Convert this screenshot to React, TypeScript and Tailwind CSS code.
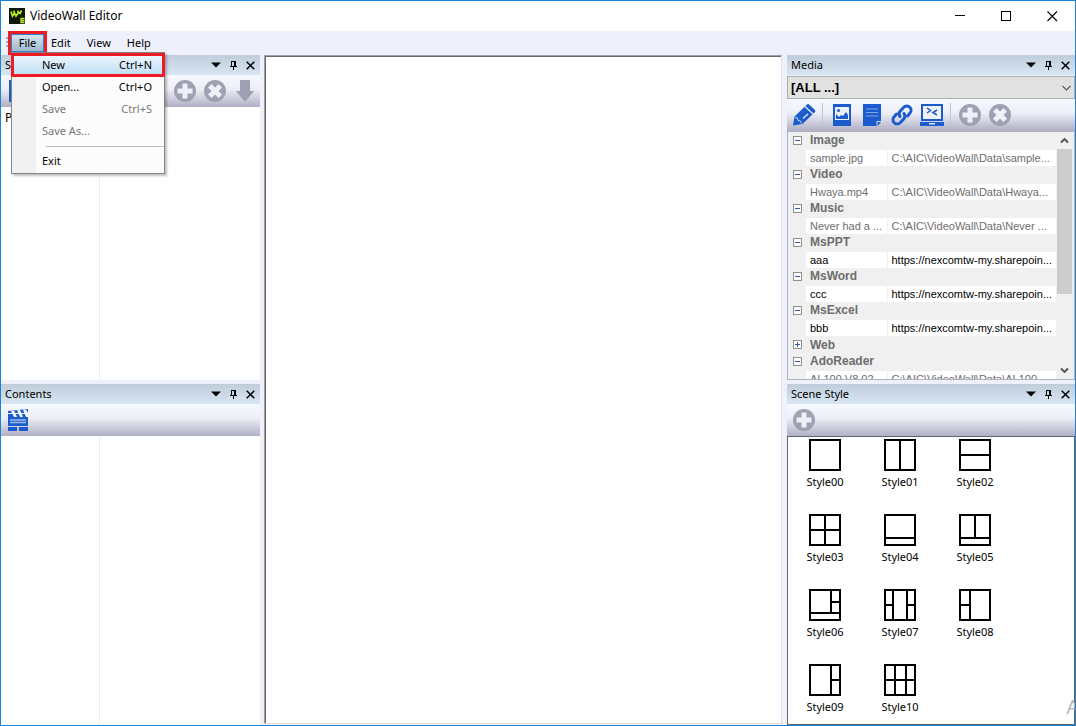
import React from "react";

const BLUE = "#1a5ccd";
const GREY = "#9da1b1";

function PanelHeader({ title }: { title: string }) {
  return (
    <header className="flex h-5 shrink-0 items-center bg-linear-to-b from-[#bfcddb] to-[#d8e6f4] pl-1 pr-[3px] text-[11px] text-black">
      <h2 className="flex-1">{title}</h2>
      <div className="flex items-center gap-[3px]">
        <button aria-label="Window position" className="flex h-3.5 w-3.5 items-center justify-center">
          <svg width="10" height="6" viewBox="0 0 10 6"><path d="M0 0.5h10L5 5.5z" fill="#000" /></svg>
        </button>
        <button aria-label="Auto hide" className="flex h-3.5 w-3.5 items-center justify-center">
          <svg width="7" height="9" viewBox="0 0 7 9" shapeRendering="crispEdges">
            <path d="M1 0h5v5h1v1H4v3H3V6H0V5h1zM2 1v4h2V1z" fillRule="evenodd" />
          </svg>
        </button>
        <button aria-label="Close panel" className="flex h-3.5 w-3.5 items-center justify-center">
          <svg width="9" height="9" viewBox="0 0 9 9"><path d="M0.7 0.7l7.6 7.6M8.3 0.7L0.7 8.3" stroke="#000" strokeWidth="1.5" /></svg>
        </button>
      </div>
    </header>
  );
}

function Toolbar({ children }: { children: React.ReactNode }) {
  return (
    <div className="flex h-8 shrink-0 items-center gap-1.5 bg-linear-to-b from-[#f6f9ff] via-[#ededf6] via-45% to-[#b0b0c6] pl-[5px] pr-[3px]">
      {children}
    </div>
  );
}

function Tool({ label, children }: { label: string; children: React.ReactNode }) {
  return (
    <button aria-label={label} className="h-6 w-6 shrink-0">
      <svg width="24" height="24" viewBox="0 0 24 24">{children}</svg>
    </button>
  );
}

const Divider = () => <span className="flex h-6 w-0.5 border-l border-[#c3c5d2]" />;

const AddTool = () => (
  <Tool label="Add">
    <circle cx="12" cy="12" r="11" fill={GREY} />
    <path d="M9.5 4.5h5v5h5v5h-5v5h-5v-5h-5v-5h5z" fill="#f0f1f8" />
  </Tool>
);

const RemoveTool = () => (
  <Tool label="Remove">
    <circle cx="12" cy="12" r="11" fill={GREY} />
    <path d="M8.5 5L12 8.5 15.5 5 19 8.5 15.5 12 19 15.5 15.5 19 12 15.5 8.5 19 5 15.5 8.5 12 5 8.5z" fill="#f0f1f8" />
  </Tool>
);

type Group = { name: string; open: boolean; item?: string; path?: string; dim?: boolean };
const groups: Group[] = [
  { name: "Image", open: true, item: "sample.jpg", path: "C:\\AIC\\VideoWall\\Data\\sample...", dim: true },
  { name: "Video", open: true, item: "Hwaya.mp4", path: "C:\\AIC\\VideoWall\\Data\\Hwaya...", dim: true },
  { name: "Music", open: true, item: "Never had a ...", path: "C:\\AIC\\VideoWall\\Data\\Never ...", dim: true },
  { name: "MsPPT", open: true, item: "aaa", path: "https://nexcomtw-my.sharepoin..." },
  { name: "MsWord", open: true, item: "ccc", path: "https://nexcomtw-my.sharepoin..." },
  { name: "MsExcel", open: true, item: "bbb", path: "https://nexcomtw-my.sharepoin..." },
  { name: "Web", open: false },
  { name: "AdoReader", open: true, item: "AL100 V8.02", path: "C:\\AIC\\VideoWall\\Data\\AL100...", dim: true },
];

function MediaTable() {
  return (
    <table className="w-full table-fixed border-collapse text-[11px] leading-4">
      <colgroup>
        <col className="w-[18px]" />
        <col className="w-[81px]" />
        <col />
      </colgroup>
      <tbody>
        {groups.map((g) => (
          <React.Fragment key={g.name}>
            <tr className="h-[17px]">
              <td className="p-0 pl-[5px]">
                <button aria-label={`Toggle ${g.name}`} className="block h-[9px] w-[9px]">
                  <svg width="9" height="9" viewBox="0 0 9 9" shapeRendering="crispEdges">
                    <rect x="0.5" y="0.5" width="8" height="8" fill="#fafafa" stroke="#919191" />
                    <path d={g.open ? "M2 4.5h5" : "M2 4.5h5M4.5 2v5"} stroke="#3b58a8" />
                  </svg>
                </button>
              </td>
              <th colSpan={2} className="p-0 pl-1 text-left text-[12px] font-bold text-[#6d6d6d]">{g.name}</th>
            </tr>
            {g.item && (
              <tr className={g.dim ? "h-[17px] text-[#6d6d6d]" : "h-[17px] text-black"}>
                <td className="p-0" />
                <td className="overflow-hidden whitespace-nowrap border-r border-t border-[#f0f0f0] bg-white p-0 pl-1">{g.item}</td>
                <td className="overflow-hidden whitespace-nowrap border-t border-[#f0f0f0] bg-white p-0 pl-1">{g.path}</td>
              </tr>
            )}
          </React.Fragment>
        ))}
      </tbody>
    </table>
  );
}

const styles: [string, string][] = [
  ["Style00", ""],
  ["Style01", "M16 0v32"],
  ["Style02", "M0 16h32"],
  ["Style03", "M16 0v32M0 16h32"],
  ["Style04", "M0 24h32"],
  ["Style05", "M16 0v24M0 24h32"],
  ["Style06", "M22 0v24M22 13h10M0 24h32"],
  ["Style07", "M9 0v32M23 0v32M0 16h9M23 16h9"],
  ["Style08", "M11 0v32M0 16h11"],
  ["Style09", "M22 0v32M22 16h10"],
  ["Style10", "M11 0v32M22 0v32M0 16h32"],
];

const menuItems = [
  { label: "New", keys: "Ctrl+N" },
  { label: "Open...", keys: "Ctrl+O" },
  { label: "Save", keys: "Ctrl+S", disabled: true },
  { label: "Save As...", keys: "", disabled: true },
];

function FileMenu() {
  return (
    <div role="menu" className="absolute left-0 top-[18px] z-10 w-[154px] border border-[#858585] bg-[#fcfcfc] bg-linear-to-r from-[#f1f1f1] from-[24px] to-[#fcfcfc] to-[24px] py-px shadow-[2px_2px_2px_rgba(0,0,0,0.25)]">
      {menuItems.map((m, i) => (
        <button
          key={m.label}
          role="menuitem"
          disabled={m.disabled}
          className={
            i === 0
              ? "relative flex h-[22px] w-full items-center bg-linear-to-b from-[#f0f8fe] to-[#bcdcf4] pl-[30px] pr-3 text-black"
              : "flex h-[22px] w-full items-center pl-[30px] pr-3 text-black disabled:text-[#777]"
          }
        >
          <span className="flex-1 text-left">{m.label}</span>
          <span>{m.keys}</span>
          {i === 0 && <span className="absolute -inset-px border-[3px] border-[#ed1c24]" />}
        </button>
      ))}
      <hr className="mb-[3px] mt-1 ml-[34px] border-[#bdbdbd]" />
      <button role="menuitem" className="flex h-[22px] w-full items-center pl-[30px] text-black">Exit</button>
    </div>
  );
}

export default function App() {
  return (
    <div className="relative flex min-h-screen w-full flex-col overflow-hidden border border-[#1883d7] bg-[#eef0fc] font-['Noto_Sans','Open_Sans',sans-serif] text-[11px] leading-4">
      <div className="flex h-[30px] shrink-0 items-center bg-white pl-2">
        <svg width="16" height="16" viewBox="0 0 16 16">
          <rect width="16" height="16" fill="#10180a" />
          <path d="M2 3.500l1.500 4.500 2-3 1.500 3 2.500-3.500 1.500 1 1.500-3M4 3.500h2M8 3.500h2" fill="none" stroke="#b7ec28" strokeWidth="1.700" />
          <path d="M15.500 10.500h-3.500v4h3.500M12 12.500h3.500" fill="none" stroke="#b7ec28" strokeWidth="1.300" />
        </svg>
        <h1 className="flex-1 pl-[5px] text-[12px] text-black">VideoWall Editor</h1>
        <div className="flex">
          <button aria-label="Minimize" className="flex h-[30px] w-[46px] items-center justify-center">
            <svg width="11" height="11" shapeRendering="crispEdges"><path d="M0 4.500h10" stroke="#000" /></svg>
          </button>
          <button aria-label="Maximize" className="flex h-[30px] w-[46px] items-center justify-center">
            <svg width="11" height="11" shapeRendering="crispEdges"><rect x="0.5" y="0.5" width="9" height="9" fill="none" stroke="#000" /></svg>
          </button>
          <button aria-label="Close" className="flex h-[30px] w-[46px] items-center justify-center">
            <svg width="11" height="11"><path d="M0.500 0.500l9.500 9.500M10 0.500L0.500 10" stroke="#000" strokeWidth="1.100" /></svg>
          </button>
        </div>
      </div>

      <nav className="flex h-6 shrink-0 items-start pl-1 pt-[3px]">
        <svg width="6" height="18" className="shrink-0" shapeRendering="crispEdges">
          <path d="M1 3h2v2H1zM1 7h2v2H1zM1 11h2v2H1z" fill="#a6a8b4" />
        </svg>
        <div className="relative">
          <button className="flex h-[18px] w-[33px] items-center justify-center border border-[#2a83d0] bg-linear-to-b from-[#d6e2ec] to-[#9fb9cd] text-black outline-[3px] outline-[#ed1c24]">File</button>
          <FileMenu />
        </div>
        <div className="flex h-[18px] items-center gap-4 pl-[7px] text-black">
          <button>Edit</button>
          <button>View</button>
          <button>Help</button>
        </div>
      </nav>

      <main className="flex min-h-0 flex-1">
        <aside className="flex w-[259px] shrink-0 flex-col">
          <section className="flex h-[325px] flex-col bg-white">
            <PanelHeader title="S" />
            <Toolbar>
              <Tool label="New scene"><path d="M3 1h18v22H3z" fill={BLUE} /></Tool>
              <span className="flex-1" />
              <AddTool />
              <RemoveTool />
              <Tool label="Move down"><path d="M7 1h10v11h4l-9 11-9-11h4z" fill={GREY} /></Tool>
            </Toolbar>
            <div className="flex flex-1">
              <div className="w-[99px] border-r border-[#ededed] pl-1 pt-[3px] text-[12px] text-black">P</div>
            </div>
          </section>
          <section className="mt-1 flex flex-1 flex-col bg-white">
            <PanelHeader title="Contents" />
            <Toolbar>
              <Tool label="Add content">
                <path d="M2 3l20-2v4H2z" fill={BLUE} />
                <path d="M2 6h20v11H2z" fill={BLUE} />
                <path d="M5 3l3 6h3L8 2.5zM11 2.3l3 6.7h3l-3-7zM17 1.8L20 9h2V5l-2-3.5z" fill="#f4f6fe" />
                <path d="M4 12h16M4 14.5h16" stroke="#9fbbed" strokeWidth="1.3" />
                <path d="M2 19h9v4H2zM13 19h9v4h-9zM2 17h20v1H2z" fill={BLUE} />
              </Tool>
            </Toolbar>
            <div className="flex flex-1">
              <div className="w-[99px] border-r border-[#ededed]" />
            </div>
          </section>
        </aside>

        <section aria-label="Canvas" className="mb-px ml-1 mr-[5px] flex-1 border border-b-[#e0e0e4] border-l-[#a0a0a0] border-r-[#e0e0e4] border-t-[#a0a0a0] bg-white shadow-[inset_1px_1px_0_#696969]" />

        <aside className="flex w-[288px] shrink-0 flex-col">
          <section className="flex h-[325px] flex-col">
            <PanelHeader title="Media" />
            <div className="relative mt-px h-[23px] shrink-0">
              <select aria-label="Media filter" className="h-full w-full appearance-none border border-[#adadad] bg-[#e1e1e1] pl-[3px] font-['Liberation_Sans',sans-serif] text-[13px] font-bold text-black">
                <option>[ALL ...]</option>
              </select>
              <svg className="pointer-events-none absolute right-1 top-[9px]" width="9" height="7"><path d="M0.5 1l4 4 4-4" fill="none" stroke="#555" strokeWidth="1.1" /></svg>
            </div>
            <Toolbar>
              <Tool label="Edit">
                <path d="M1 22.500l1.500-9L15 1.500q1-.8 2 0l6 5.500q.8 1 0 2L10.500 21z" fill={BLUE} />
                <path d="M13 3.500l8 7.500" stroke="#e8ecf8" strokeWidth="1.300" />
                <path d="M3 14.500l2.500.5.500 2.500 2.500.5 1 2.500" fill="none" stroke="#c9d6f2" strokeWidth="1" />
                <path d="M11 15.500l5-4.500" stroke="#e8ecf8" strokeWidth="1.300" />
              </Tool>
              <Divider />
              <Tool label="Add image">
                <path d="M3 1h18v22H3z" fill={BLUE} />
                <path d="M5 4h14v13H5z" fill="#eef1fa" />
                <path d="M6 16v-5l3 3 2-2 2 1 3-4 2 3v4z" fill={BLUE} />
                <circle cx="8.500" cy="7.500" r="1.500" fill={BLUE} />
              </Tool>
              <Tool label="Add document">
                <path d="M3 1h18v17h-4.500v5H3zM17.500 19H21L17.500 23z" fill={BLUE} />
                <path d="M6 6h12M6 9.500h12M6 13h12" stroke="#7fa3e4" strokeWidth="1.200" />
              </Tool>
              <Tool label="Add link">
                <g fill="none" stroke={BLUE} strokeWidth="3" strokeLinecap="round">
                  <path d="M10 13.500a4.300 4.300 0 0 1 .3-5.500l3.500-3.700a4.200 4.200 0 0 1 6 6L17.500 13" />
                  <path d="M14 10.500a4.300 4.300 0 0 1-.3 5.500l-3.500 3.700a4.200 4.200 0 0 1-6-6L6.500 11" />
                </g>
              </Tool>
              <Tool label="Add application">
                <path d="M1 1h22v17H1zM0 19h24v4H0z" fill={BLUE} />
                <path d="M3 3h18v13H3z" fill="#eef1fa" />
                <path d="M7 5l3.500 2.500L7 10M17 7l-4 2.500 4 2.500" fill="none" stroke={BLUE} strokeWidth="1.500" />
                <path d="M9 20h6v1.500H9z" fill="#dfe3f2" />
              </Tool>
              <Divider />
              <AddTool />
              <RemoveTool />
            </Toolbar>
            <div className="flex min-h-0 flex-1 overflow-hidden border border-[#b1b1bd] bg-[#f0f0f0] font-['Liberation_Sans',sans-serif]">
              <div className="min-w-0 flex-1">
                <MediaTable />
              </div>
              <div className="mr-px flex w-[17px] shrink-0 flex-col items-center">
                <button aria-label="Scroll up" className="flex h-[17px] w-full shrink-0 items-center justify-center">
                  <svg width="9" height="7"><path d="M1 5.500l3.500-3.500L8 5.500" fill="none" stroke="#505050" strokeWidth="1.800" /></svg>
                </button>
                <div className="h-[145px] w-[15px] shrink-0 bg-[#cdcdcd]" />
                <span className="flex-1" />
                <button aria-label="Scroll down" className="flex h-[17px] w-full shrink-0 items-center justify-center">
                  <svg width="9" height="7"><path d="M1 1.500L4.500 5 8 1.500" fill="none" stroke="#505050" strokeWidth="1.800" /></svg>
                </button>
              </div>
            </div>
          </section>
          <section className="mt-1 flex flex-1 flex-col">
            <PanelHeader title="Scene Style" />
            <Toolbar>
              <AddTool />
            </Toolbar>
            <ul className="grid flex-1 grid-cols-[74px_74px_74px] content-start gap-x-px gap-y-6 border border-[#646464] bg-white pt-[2px]">
              {styles.map(([name, lines]) => (
                <li key={name}>
                  <button className="flex w-full flex-col items-center gap-[3px] text-black">
                    <svg width="32" height="32" viewBox="0 0 32 32" shapeRendering="crispEdges">
                      <rect x="1" y="1" width="30" height="30" fill="none" stroke="#000" strokeWidth="2" />
                      <path d={lines} stroke="#000" strokeWidth="2" fill="none" />
                    </svg>
                    <span>{name}</span>
                  </button>
                </li>
              ))}
            </ul>
          </section>
        </aside>
      </main>
      <span className="absolute -right-1 bottom-1 text-[20px] leading-7 text-[#b9b9b9]">A</span>
    </div>
  );
}
